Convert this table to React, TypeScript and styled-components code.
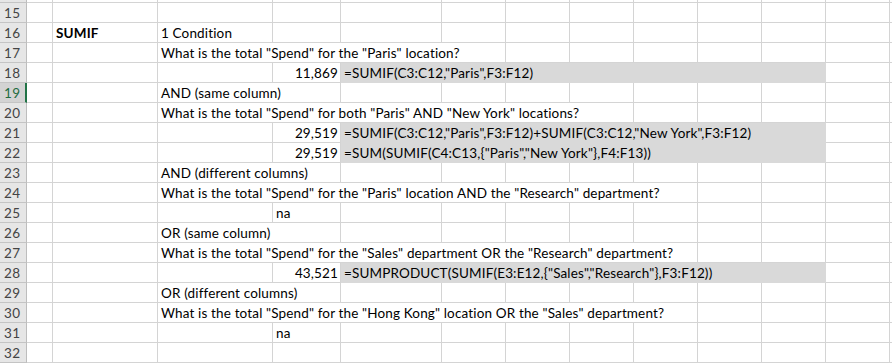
import styled, { createGlobalStyle } from "styled-components";

const GlobalStyle = createGlobalStyle`
  html, body {
    margin: 0;
    padding: 0;
    background: #ffffff;
  }
  body {
    font-family: Lato, "Liberation Sans", sans-serif;
  }
`;

// header, A, B, C, D, E, F..L (64 each), M
const COLS = "27px 26px 105px 115px 68px 101px 64px 64px 64px 64px 64px 64px 64px 1fr";
const DATA_COLS = 13; // A..M

type Kind = "text" | "bold" | "num" | "formula";

type CellSpec = {
  col: number; // 0 = A
  span?: number;
  text: string;
  kind?: Kind;
  fill?: boolean;
};

type RowSpec = {
  num: number;
  cells: CellSpec[];
  active?: boolean;
};

const Sheet = styled.div`
  display: grid;
  grid-template-columns: ${COLS};
  width: 892px;
  overflow: hidden;
  font-size: 13.5px;
  letter-spacing: 0.15px;
  color: #000;
`;

const RowHead = styled.div<{ $active?: boolean; $h?: number }>`
  box-sizing: border-box;
  height: ${(p) => p.$h ?? 20}px;
  background: ${(p) => (p.$active ? "#d3d3d3" : "#e6e6e6")};
  color: ${(p) => (p.$active ? "#1e6c41" : "#444444")};
  border-bottom: 1px solid #c4c4c4;
  border-right: ${(p) => (p.$active ? "2px solid #217346" : "1px solid #bdbdbd")};
  padding-left: 4px;
  display: flex;
  align-items: flex-end;
  padding-bottom: 2px;
  font-size: 13.5px;
  letter-spacing: 0.3px;
  line-height: 14px;
  overflow: hidden;
`;

const Cell = styled.div<{ $span: number; $kind: Kind; $fill?: boolean; $h?: number }>`
  box-sizing: border-box;
  height: ${(p) => p.$h ?? 20}px;
  grid-column: span ${(p) => p.$span};
  background: ${(p) => (p.$fill ? "#d9d9d9" : "#ffffff")};
  border-right: 1px solid ${(p) => (p.$fill ? "#d9d9d9" : "#d4d4d4")};
  border-bottom: 1px solid ${(p) => (p.$fill ? "#d9d9d9" : "#d4d4d4")};
  display: flex;
  align-items: flex-end;
  justify-content: ${(p) => (p.$kind === "num" ? "flex-end" : "flex-start")};
  padding: 0 ${(p) => (p.$kind === "num" ? "2px" : "0")} 2px
    ${(p) => (p.$kind === "num" ? "0" : "3px")};
  font-weight: ${(p) => (p.$kind === "bold" ? 700 : 400)};
  line-height: 14px;
  white-space: pre;
  overflow: hidden;
`;

const rows: RowSpec[] = [
  { num: 15, cells: [] },
  {
    num: 16,
    cells: [
      { col: 1, text: "SUMIF", kind: "bold" },
      { col: 2, text: "1 Condition" },
    ],
  },
  {
    num: 17,
    cells: [{ col: 2, span: 4, text: 'What is the total "Spend" for the "Paris" location?' }],
  },
  {
    num: 18,
    cells: [
      { col: 3, text: "11,869", kind: "num" },
      { col: 4, span: 7, text: '=SUMIF(C3:C12,"Paris",F3:F12)', fill: true },
    ],
  },
  { num: 19, active: true, cells: [{ col: 2, span: 2, text: "AND (same column)" }] },
  {
    num: 20,
    cells: [
      {
        col: 2,
        span: 6,
        text: 'What is the total "Spend" for both "Paris" AND "New York" locations?',
      },
    ],
  },
  {
    num: 21,
    cells: [
      { col: 3, text: "29,519", kind: "num" },
      {
        col: 4,
        span: 7,
        text: '=SUMIF(C3:C12,"Paris",F3:F12)+SUMIF(C3:C12,"New York",F3:F12)',
        fill: true,
      },
    ],
  },
  {
    num: 22,
    cells: [
      { col: 3, text: "29,519", kind: "num" },
      {
        col: 4,
        span: 7,
        text: '=SUM(SUMIF(C4:C13,{"Paris","New York"},F4:F13))',
        fill: true,
      },
    ],
  },
  { num: 23, cells: [{ col: 2, span: 2, text: "AND (different columns)" }] },
  {
    num: 24,
    cells: [
      {
        col: 2,
        span: 7,
        text: 'What is the total "Spend" for the "Paris" location AND the "Research" department?',
      },
    ],
  },
  { num: 25, cells: [{ col: 3, text: "na" }] },
  { num: 26, cells: [{ col: 2, span: 2, text: "OR (same column)" }] },
  {
    num: 27,
    cells: [
      {
        col: 2,
        span: 7,
        text: 'What is the total "Spend" for the "Sales" department OR the "Research" department?',
      },
    ],
  },
  {
    num: 28,
    cells: [
      { col: 3, text: "43,521", kind: "num" },
      {
        col: 4,
        span: 7,
        text: '=SUMPRODUCT(SUMIF(E3:E12,{"Sales","Research"},F3:F12))',
        fill: true,
      },
    ],
  },
  { num: 29, cells: [{ col: 2, span: 2, text: "OR (different columns)" }] },
  {
    num: 30,
    cells: [
      {
        col: 2,
        span: 7,
        text: 'What is the total "Spend" for the "Hong Kong" location OR the "Sales" department?',
      },
    ],
  },
  { num: 31, cells: [{ col: 3, text: "na" }] },
  { num: 32, cells: [] },
];

function renderRow(row: RowSpec, height?: number) {
  const out = [
    <RowHead key={`h${row.num}`} $active={row.active} $h={height}>
      {height ? "" : row.num}
    </RowHead>,
  ];
  let col = 0;
  while (col < DATA_COLS) {
    const spec = row.cells.find((c) => c.col === col);
    const span = spec?.span ?? 1;
    out.push(
      <Cell
        key={`${row.num}-${col}`}
        $span={span}
        $kind={spec?.kind ?? "text"}
        $fill={spec?.fill}
        $h={height}
      >
        {spec?.text ?? ""}
      </Cell>
    );
    col += span;
  }
  return out;
}

export default function App() {
  return (
    <>
      <GlobalStyle />
      <Sheet>
        {/* bottom edge of row 14, scrolled mostly out of view */}
        {renderRow({ num: 14, cells: [] }, 2)}
        {rows.map((r) => renderRow(r))}
      </Sheet>
    </>
  );
}
